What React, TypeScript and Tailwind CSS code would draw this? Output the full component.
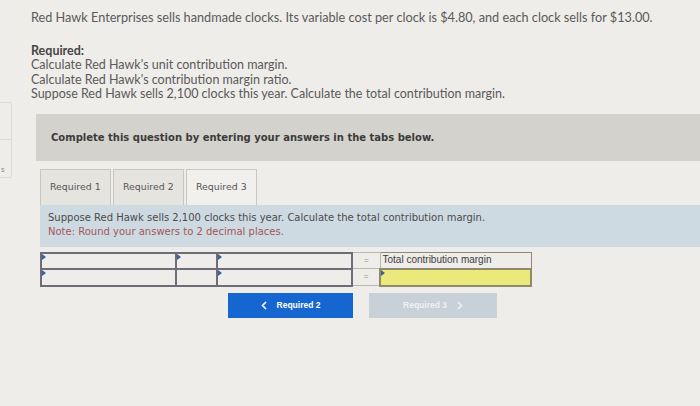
export default function App() {
  const marker = (
    <span className="absolute left-0 top-0 w-0 h-0 border-y-[3px] border-y-transparent border-l-[4px] border-l-[#3d5f9e]" />
  );
  const inputCell = "relative border-2 border-[#6d6c78] p-0";
  return (
    <div className="w-[700px] h-[406px] bg-[#eeede9] overflow-hidden flex flex-col font-['Liberation_Sans',Arial,sans-serif] text-[#4e4e4e]">
      <div className="pl-[31px] pt-[10px] text-[12.5px] leading-[14.5px] font-['Lato',sans-serif] text-[#5a5a5a]">
        <p className="text-[12.7px]">Red Hawk Enterprises sells handmade clocks. Its variable cost per clock is $4.80, and each clock sells for $13.00.</p>
        <p className="mt-[19px] font-bold text-[#454545]">Required:</p>
        <p>Calculate Red Hawk's unit contribution margin.</p>
        <p>Calculate Red Hawk's contribution margin ratio.</p>
        <p>Suppose Red Hawk sells 2,100 clocks this year. Calculate the total contribution margin.</p>
      </div>
      <div className="flex flex-1">
        <div className="w-[12px] h-[76px] border border-l-0 border-[#dcdad4] rounded-r-[3px] flex flex-col justify-end shrink-0">
          <div className="border-t border-[#dcdad4] h-[24px]" />
          <span className="text-[7px] leading-[14px] text-[#888] pl-[1px]">s</span>
        </div>
        <div className="ml-[24px] mt-[12px] flex-1 flex flex-col font-['DejaVu_Sans',Verdana,sans-serif]">
          <div className="h-[47px] bg-[#d3d2cc] flex items-center pl-[15px] text-[10px] font-bold text-[#3b3b3b]">
            Complete this question by entering your answers in the tabs below.
          </div>
          <div className="mt-[8px] ml-[4px] flex gap-[2px] h-[36px] text-[9.4px] text-[#555]">
            <div className="w-[71px] border border-b-0 border-[#c9c7c1] bg-[#e6e4df] flex items-center pl-[9px]">Required 1</div>
            <div className="w-[71px] border border-b-0 border-[#c9c7c1] bg-[#e6e4df] flex items-center pl-[9px]">Required 2</div>
            <div className="w-[71px] border border-b-0 border-[#c9c7c1] bg-[#f1f0ec] flex items-center pl-[9px]">Required 3</div>
          </div>
          <div className="ml-[4px] h-[42px] bg-[#cedae1] pl-[8px] pt-[6px] text-[10px] leading-[14px]">
            <p className="text-[#4a4a4a]">Suppose Red Hawk sells 2,100 clocks this year. Calculate the total contribution margin.</p>
            <p className="text-[#a5565c]">Note: Round your answers to 2 decimal places.</p>
          </div>
          <table className="mt-[5px] ml-[4px] border-collapse">
            <tbody>
              <tr className="h-[16px]">
                <td className={inputCell + " w-[135px]"}>{marker}</td>
                <td className={inputCell + " w-[41px]"}>{marker}</td>
                <td className={inputCell + " w-[135px]"}>{marker}</td>
                <td className="w-[28px] border border-[#b9b7b0] text-center text-[8px] leading-[14px] text-[#8f8f8f] font-['Liberation_Sans',sans-serif]">=</td>
                <td className="w-[151px] border border-[#8f8a78] text-[10px] text-[#3c3c3c] pl-[2px] font-['Liberation_Sans',sans-serif] leading-[14px]">Total contribution margin</td>
                <td className="border-0" />
              </tr>
              <tr className="h-[17px]">
                <td className={inputCell}>{marker}</td>
                <td className={inputCell}></td>
                <td className={inputCell}>{marker}</td>
                <td className="border border-[#b9b7b0] text-center text-[8px] leading-[14px] text-[#8f8f8f] font-['Liberation_Sans',sans-serif]">=</td>
                <td className="relative border-2 border-[#8f8a6a] bg-[#ece97c]">{marker}</td>
                <td className="border-0" />
              </tr>
            </tbody>
          </table>
          <div className="mt-[6px] pl-[192px] flex gap-[16px] font-['Liberation_Sans',sans-serif]">
            <div className="w-[125px] h-[25px] bg-[#1666d1] flex items-center justify-center gap-[10px] text-white text-[8.5px] font-bold">
              <svg width="6" height="9" viewBox="0 0 6 9"><path d="M5 1 L1.5 4.5 L5 8" fill="none" stroke="white" strokeWidth="1.6" /></svg>
              <span>Required 2</span>
            </div>
            <div className="w-[128px] h-[25px] bg-[#c8d0d8] flex items-center justify-center gap-[10px] text-[#eef1f4] text-[8.5px] font-bold">
              <span>Required 3</span>
              <svg width="6" height="9" viewBox="0 0 6 9"><path d="M1 1 L4.5 4.5 L1 8" fill="none" stroke="#eef1f4" strokeWidth="1.6" /></svg>
            </div>
          </div>
        </div>
      </div>
    </div>
  );
}
